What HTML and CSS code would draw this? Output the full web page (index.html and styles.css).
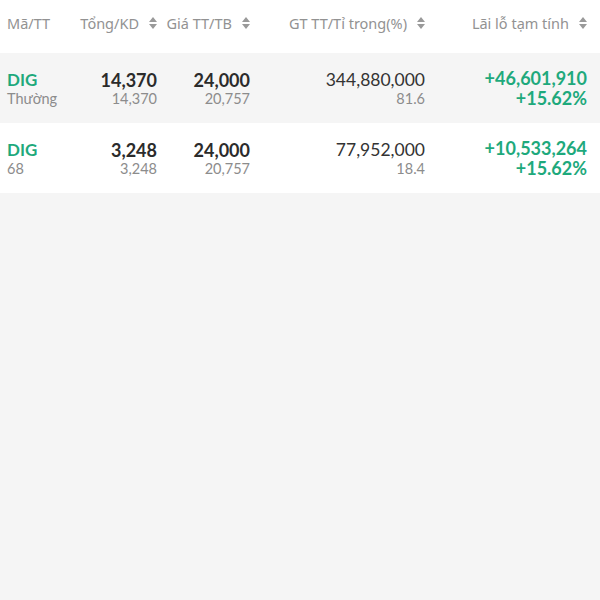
FILE: index.html
```html
<!DOCTYPE html>
<html lang="vi">
<head>
<meta charset="utf-8">
<link rel="stylesheet" href="styles.css">
</head>
<body>
<div class="table">
  <div class="row head">
    <div class="cell left"><span>Mã/TT</span></div>
    <div class="cell"><span>Tổng/KD</span><svg class="sort" viewBox="0 0 8 12"><path d="M4 0 L8 5 H0 Z M4 12 L0 7 H8 Z"/></svg></div>
    <div class="cell"><span>Giá TT/TB</span><svg class="sort" viewBox="0 0 8 12"><path d="M4 0 L8 5 H0 Z M4 12 L0 7 H8 Z"/></svg></div>
    <div class="cell"><span>GT TT/Tỉ trọng(%)</span><svg class="sort" viewBox="0 0 8 12"><path d="M4 0 L8 5 H0 Z M4 12 L0 7 H8 Z"/></svg></div>
    <div class="cell"><span>Lãi lỗ tạm tính</span><svg class="sort" viewBox="0 0 8 12"><path d="M4 0 L8 5 H0 Z M4 12 L0 7 H8 Z"/></svg></div>
  </div>
  <div class="row data shade">
    <div class="cell left col"><span class="sym">DIG</span><span class="sub">Thường</span></div>
    <div class="cell col"><span class="main">14,370</span><span class="sub">14,370</span></div>
    <div class="cell col"><span class="main">24,000</span><span class="sub">20,757</span></div>
    <div class="cell col"><span class="val">344,880,000</span><span class="sub">81.6</span></div>
    <div class="cell col"><span class="gain">+46,601,910</span><span class="gain">+15.62%</span></div>
  </div>
  <div class="row data">
    <div class="cell left col"><span class="sym">DIG</span><span class="sub">68</span></div>
    <div class="cell col"><span class="main">3,248</span><span class="sub">3,248</span></div>
    <div class="cell col"><span class="main">24,000</span><span class="sub">20,757</span></div>
    <div class="cell col"><span class="val">77,952,000</span><span class="sub">18.4</span></div>
    <div class="cell col"><span class="gain">+10,533,264</span><span class="gain">+15.62%</span></div>
  </div>
</div>
</body>
</html>
```
FILE: styles.css
```css
* { box-sizing: border-box; }
html, body { margin: 0; padding: 0; }
body {
  background: #f5f5f5;
  font-family: Lato, "Noto Sans", sans-serif;
  color: #333;
  width: 600px;
  height: 600px;
}
.row {
  display: grid;
  grid-template-columns: 60px 90px 93px 175px 162px;
  padding: 0 13px 0 7px;
  align-items: center;
}
.head {
  height: 53px;
  padding-bottom: 8px;
  background: #fff;
  font-family: "Noto Sans", sans-serif;
  font-size: 14.5px;
  color: #929292;
}
.data { height: 70px; background: #fff; }
.data.shade { background: #f5f5f5; }
.cell {
  display: flex;
  justify-content: flex-end;
  align-items: center;
  white-space: nowrap;
}
.cell.left { justify-content: flex-start; }
.col { flex-direction: column; align-items: flex-end; }
.col.left { align-items: flex-start; }
.sort {
  width: 8px;
  height: 12px;
  margin-left: 10px;
  fill: #9a9a9a;
}
.sym { font-size: 17px; font-weight: 700; color: #1ea97c; line-height: 20px; }
.main { font-size: 18px; font-weight: 700; color: #2b2b2b; line-height: 20px; }
.val { font-size: 17.5px; color: #333; line-height: 20px; }
.sub { font-size: 14.5px; color: #8c8c8c; line-height: 17px; }
.gain { font-size: 18px; font-weight: 700; color: #1ea97c; line-height: 20px; }
```
